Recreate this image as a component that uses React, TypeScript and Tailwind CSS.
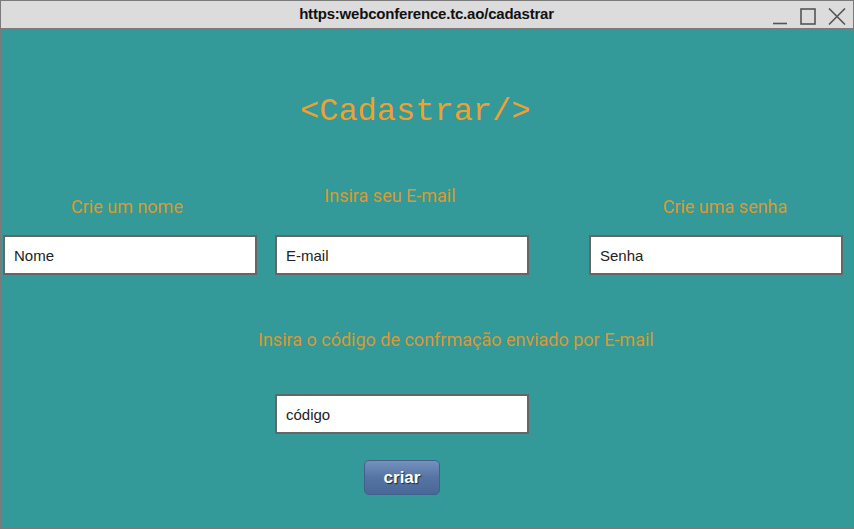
import { type ReactNode } from "react";

const LABEL = "text-[18px] leading-5 text-[#d89a36]";

function Field({ placeholder }: { placeholder: string }) {
  return (
    <input
      readOnly
      placeholder={placeholder}
      className="h-10 w-[254px] border-2 border-[#666666] bg-white px-[9px] text-[15px] text-[#222] placeholder:text-[#222] outline-none [font-family:'Liberation_Sans',Arial,sans-serif]"
    />
  );
}

function Column({ label, labelGap, children }: { label: string; labelGap: string; children: ReactNode }) {
  return (
    <div className="flex flex-col items-center">
      <span className={`${LABEL} ${labelGap}`}>{label}</span>
      {children}
    </div>
  );
}

export default function App() {
  return (
    <div className="flex h-[529px] w-[854px] flex-col overflow-hidden border border-[#7a7a7a] [font-family:Roboto,'Liberation_Sans',sans-serif]">
      {/* window title bar */}
      <div className="relative flex h-[28px] shrink-0 items-center justify-center border-b border-[#7a7a7a] bg-[#dcdcdc]">
        <span className="-ml-[1px] text-[15px] font-bold tracking-[-0.2px] text-[#111] [font-family:'Liberation_Sans',Arial,sans-serif]">
          https:webconference.tc.ao/cadastrar
        </span>
        <div className="absolute right-[7px] top-[7px] flex items-end gap-[12px] text-[#555]">
          <svg width="15" height="17" viewBox="0 0 15 17">
            <path d="M0 15.5h14" stroke="currentColor" strokeWidth="1.6" />
          </svg>
          <svg width="16" height="17" viewBox="0 0 16 17">
            <rect x="1" y="1" width="14" height="15" fill="none" stroke="currentColor" strokeWidth="1.6" />
          </svg>
          <svg width="18" height="17" viewBox="0 0 18 17">
            <path d="M1 0.5l16 16M17 0.5l-16 16" stroke="currentColor" strokeWidth="1.6" />
          </svg>
        </div>
      </div>

      {/* page */}
      <div className="flex flex-1 flex-col bg-[#339999]">
        <h1 className="ml-[299px] mt-[65px] text-[32px] leading-9 text-[#f0a030] [font-family:'Liberation_Mono','Courier_New',monospace]">
          &lt;Cadastrar/&gt;
        </h1>

        <div className="mt-[56px] flex items-end pl-[2px]">
          <Column label="Crie um nome" labelGap="mb-[18px] -ml-[6px]">
            <Field placeholder="Nome" />
          </Column>
          <div className="ml-[18px]">
            <Column label="Insira seu E-mail" labelGap="mb-[29px] -ml-[24px]">
              <Field placeholder="E-mail" />
            </Column>
          </div>
          <div className="ml-[60px]">
            <Column label="Crie uma senha" labelGap="mb-[18px] ml-[18px]">
              <Field placeholder="Senha" />
            </Column>
          </div>
        </div>

        <p className={`${LABEL} ml-[257px] mt-[55px]`}>
          Insira o código de confrmação enviado por E-mail
        </p>

        <div className="ml-[274px] mt-[44px]">
          <Field placeholder="código" />
        </div>

        <button className="ml-[363px] mt-[26px] h-[35px] w-[76px] rounded-[5px] border border-[#40608e] bg-gradient-to-b from-[#7592bd] via-[#5674a3] to-[#4a6897] text-[17px] font-bold text-white [font-family:'Liberation_Sans',Arial,sans-serif] [text-shadow:1px_1px_1px_#1a2a40]">
          criar
        </button>
      </div>
    </div>
  );
}
